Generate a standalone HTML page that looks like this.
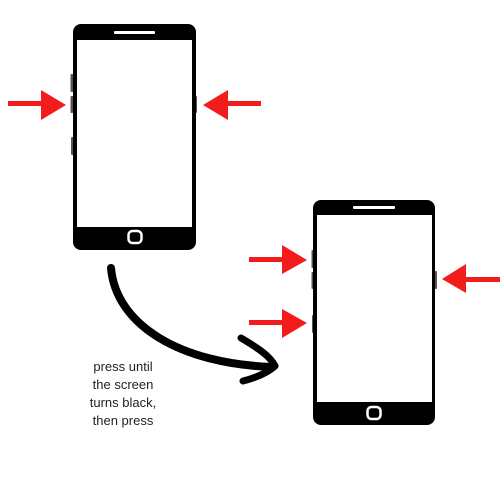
<!DOCTYPE html>
<html><head><style>
body{margin:0;width:500px;height:500px;background:#fff;overflow:hidden;position:relative;font-family:"Liberation Sans",sans-serif}
.t{position:absolute;left:63px;top:358px;width:120px;text-align:center;font-size:13px;line-height:18px;color:#222}
</style></head><body>
<svg width="500" height="500" style="position:absolute;left:0;top:0">
<!-- phone 1 -->
<g fill="#555">
<rect x="70.5" y="74" width="3" height="18" rx="1"/><rect x="70.5" y="96" width="3" height="17" rx="1"/><rect x="71" y="137" width="3" height="18" rx="1"/><rect x="194" y="96" width="3" height="17" rx="1"/>
</g>
<rect x="73" y="24" width="123" height="226" rx="8" fill="#000"/>
<rect x="77" y="40" width="115" height="187" fill="#fff"/>
<rect x="114" y="31" width="41" height="3" rx="1" fill="#fff"/>
<rect x="128.5" y="231" width="13" height="12" rx="4" fill="none" stroke="#fff" stroke-width="2.5"/>
<!-- phone 2 -->
<g fill="#555">
<rect x="311.5" y="250" width="3" height="18" rx="1"/><rect x="311.5" y="272" width="3" height="17" rx="1"/><rect x="312" y="315" width="3" height="18" rx="1"/><rect x="434" y="271" width="3" height="18" rx="1"/>
</g>
<rect x="313" y="200" width="122" height="225" rx="8" fill="#000"/>
<rect x="317" y="215" width="115" height="187" fill="#fff"/>
<rect x="353" y="206" width="42" height="3" rx="1" fill="#fff"/>
<rect x="367.5" y="407" width="13" height="12" rx="4" fill="none" stroke="#fff" stroke-width="2.5"/>
<!-- arrows -->
<g fill="#f21c1c">
<rect x="8" y="101" width="35" height="5"/><polygon points="41,90 66,105 41,120"/>
<rect x="228" y="101" width="33" height="5"/><polygon points="228,90 203,105 228,120"/>
<rect x="249" y="257" width="34" height="5"/><polygon points="282,245 307,260 282,274"/>
<rect x="249" y="320" width="34" height="5"/><polygon points="282,309 307,323 282,338"/>
<rect x="466" y="277" width="34" height="5"/><polygon points="466,264 442,279 466,293"/>
</g>
<!-- curved arrow -->
<path d="M111 268 C 116 325, 180 364, 273 367" fill="none" stroke="#000" stroke-width="8" stroke-linecap="round"/>
<path d="M241 338 C 258 348, 270 356, 275 366 C 266 374, 255 378, 243 381" fill="none" stroke="#000" stroke-width="7" stroke-linecap="round" stroke-linejoin="round"/>
</svg>
<div class="t">press until<br>the screen<br>turns black,<br>then press</div>
</body></html>
